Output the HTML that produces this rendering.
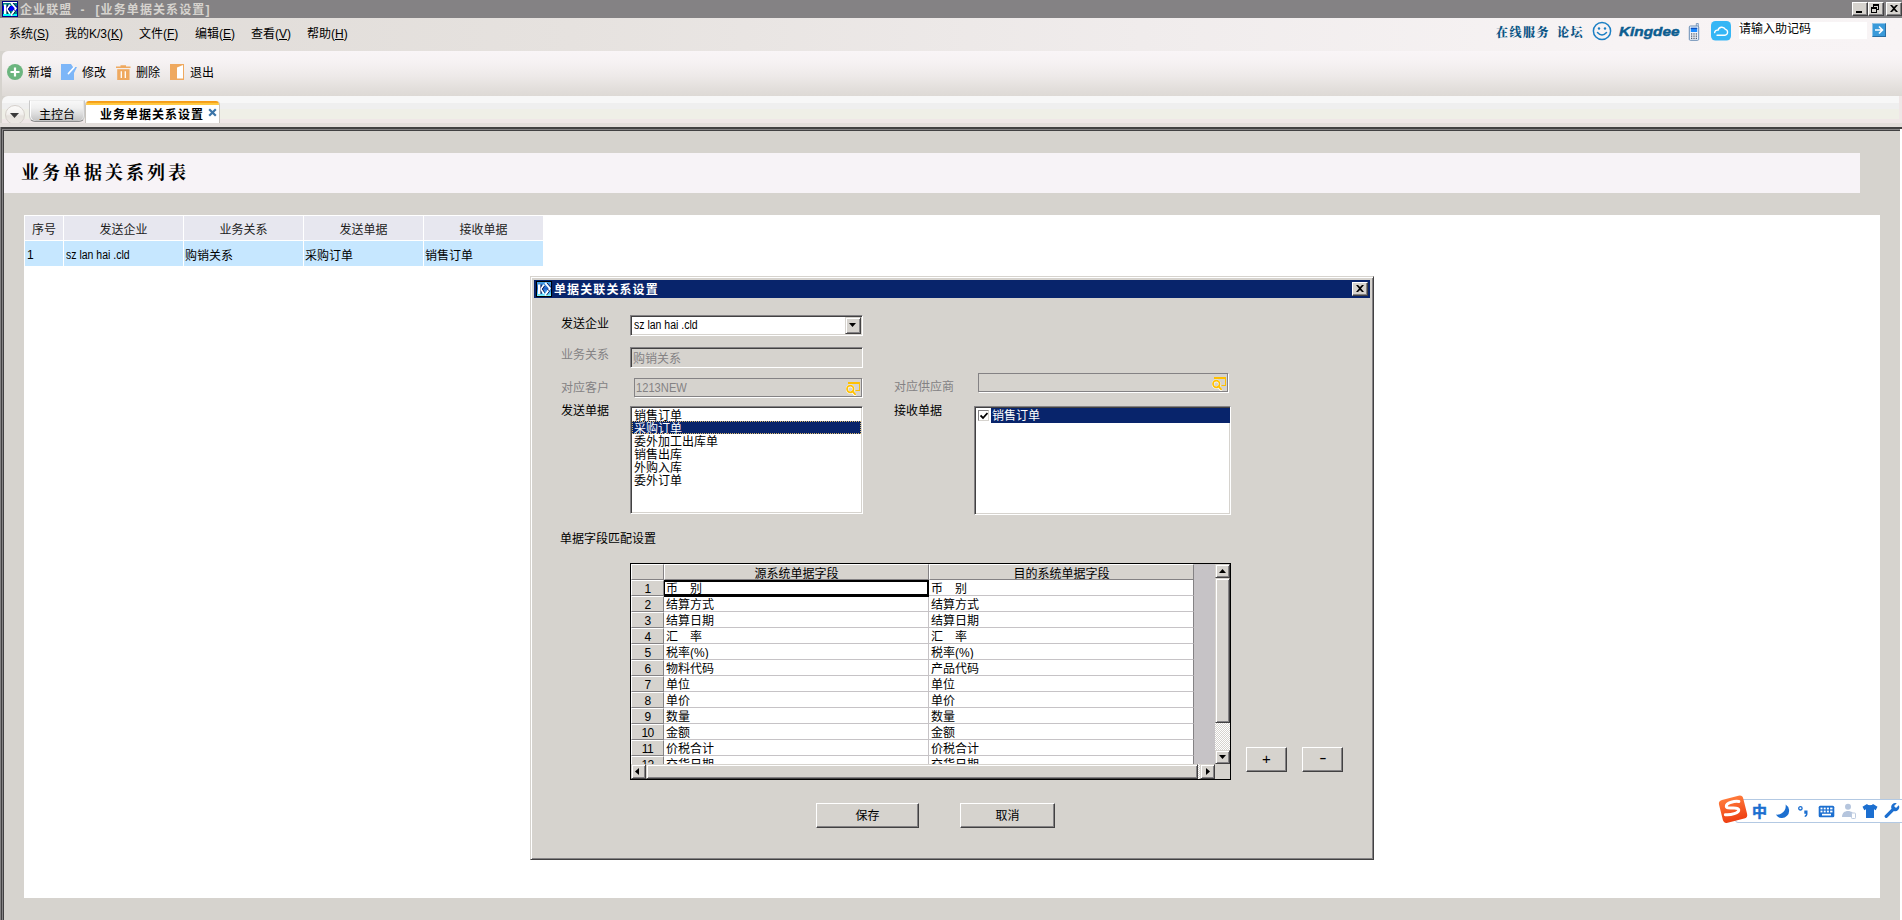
<!DOCTYPE html>
<html lang="zh-CN">
<head>
<meta charset="utf-8">
<title>企业联盟 - [业务单据关系设置]</title>
<style>
*{box-sizing:border-box;margin:0;padding:0}
html,body{width:1902px;height:920px;overflow:hidden;background:#d6d3ce}
body{position:relative;font:12px/12px "Liberation Sans","Noto Sans CJK SC",sans-serif;color:#000}
.a{position:absolute;white-space:nowrap}
.t{position:absolute;white-space:nowrap;height:14px;line-height:14px}
.tah{font-family:"Liberation Sans","Noto Sans CJK SC",sans-serif;font-size:12px;letter-spacing:-0.6px}
/* title bar */
#tb{left:0;top:0;width:1902px;height:18px;background:#848284}
#tb .cap{left:20px;top:3px;color:#d6d3ce;font-weight:bold;letter-spacing:1.1px}
.wb{position:absolute;top:2px;width:16px;height:14px;background:#d6d3ce;border:1px solid;border-color:#fff #424142 #424142 #fff;box-shadow:inset -1px -1px 0 #848284}
/* menubar */
#mb{left:0;top:18px;width:1902px;height:33px;background:linear-gradient(90deg,#dfdbd7 0,#e6e2df 30%,#f0ecec 60%,#f7f3f4 85%,#f8f4f5 100%)}
#mb .t{top:9px}
#mb u{text-underline-offset:1px}
.lnk{color:#0b5585;font-weight:900;font-family:'Liberation Serif','Noto Serif CJK SC',serif}
/* toolbar */
#tl{left:2px;top:51px;width:1900px;height:45px;border-radius:6px 0 0 0;background:linear-gradient(180deg,#f9f5f7 0,#f6f2f3 25%,#eeeae9 55%,#e2dedb 85%,#ddd9d5 100%)}
#tl .t{top:15px}
/* tab row */
#tr{left:2px;top:96px;width:1897px;height:27px;border-radius:6px 0 0 0;background:linear-gradient(180deg,#f7f7f7 0,#f7f7f7 7px,#efefef 7px,#efefef 13px,#efefe7 13px,#efefe7 23px,#efe7e7 23px,#efe7e7 27px)}
#trb{left:0;top:123px;width:1902px;height:4px;background:#e3dedb}
/* main */
#fr{left:0;top:127px;width:1902px;height:793px;background:#d6d3ce}

#fr .l{position:absolute;background:#424142}
#hd{left:4px;top:153px;width:1856px;height:40px;background:#f7f3f7}
#hd div{left:17px;top:9px;height:22px;font:bold 18px/22px "Liberation Serif","Noto Serif CJK SC",serif;letter-spacing:3px}
#wp{left:24px;top:215px;width:1856px;height:683px;background:#fff}
.th{position:absolute;top:216px;height:24px;background:#e7e7ef;text-align:center;line-height:29px;color:#222}
.td{position:absolute;top:241px;height:25px;background:#c6e7ff;line-height:31px;padding-left:1px}
.td.tah{line-height:29px}
/* dialog */
#dg{left:530px;top:276px;width:844px;height:584px;background:#d6d3ce;border:1px solid;border-color:#d6d3ce #424142 #424142 #d6d3ce;box-shadow:inset 1px 1px 0 #fff,inset -1px -1px 0 #848284}
#dg .cap{left:3px;top:3px;width:836px;height:18px;background:#08246b}
#dg .cap .t{left:20px;top:3px;color:#fff;font-weight:bold;letter-spacing:1.1px}
.gr{color:#848284}
.sunk{position:absolute;border:1px solid;border-color:#848284 #fff #fff #848284;box-shadow:inset 1px 1px 0 #424142,inset -1px -1px 0 #d6d3ce;background:#fff}
.flat{position:absolute;border:1px solid #848284;background:#d6d3ce;box-shadow:1px 1px 0 #fff}
.btn{position:absolute;background:#d6d3ce;border:1px solid;border-color:#fff #424142 #424142 #fff;box-shadow:inset -1px -1px 0 #848284,inset 1px 1px 0 #d6d3ce;text-align:center}
.sel{background:#08246b;color:#fff}
.li{position:absolute;left:1px;width:229px;height:13px;line-height:16px;padding-left:2px;overflow:hidden;white-space:nowrap}

.gh{position:absolute;height:16px;background:#d6d3ce;border:1px solid;border-color:#fff #848284 #848284 #fff;text-align:center;line-height:16px;white-space:nowrap;overflow:hidden}
.ght{line-height:19px}
.gc{position:absolute;width:265px;height:16px;background:#fff;border:1px solid #c6c3c6;border-width:0 1px 1px 0;line-height:18px;padding-left:2px;white-space:nowrap;overflow:hidden}
.gc2{border-right-color:#848284}
.dith{background:repeating-conic-gradient(#fff 0 25%,#d6d3ce 0 50%) 0 0/2px 2px}
.sb{position:absolute;background:#d6d3ce;border:1px solid;border-color:#d6d3ce #424142 #424142 #d6d3ce;box-shadow:inset 1px 1px 0 #fff,inset -1px -1px 0 #848284}
.nx{display:inline-block;transform:scaleX(.875);transform-origin:0 50%;letter-spacing:0}
</style>
</head>
<body>
<div class="a" id="tb">
  <svg class="a" style="left:2px;top:1px" width="16" height="16" viewBox="0 0 16 16"><defs><linearGradient id="k1" x1="0" y1="0" x2="0" y2="1"><stop offset="0" stop-color="#fff"/><stop offset="0.08" stop-color="#fff"/><stop offset="0.09" stop-color="#008484"/><stop offset="0.25" stop-color="#008484"/><stop offset="0.3" stop-color="#0000ff"/><stop offset="0.6" stop-color="#0000ff"/><stop offset="0.65" stop-color="#008484"/><stop offset="0.84" stop-color="#008484"/><stop offset="0.86" stop-color="#00ffff"/><stop offset="1" stop-color="#00ffff"/></linearGradient></defs><rect width="16" height="16" fill="#000084"/><rect x="1" y="1" width="14" height="14" fill="url(#k1)"/><path d="M2 3.500h2.600v9.500H2z" fill="#fff"/><path d="M4.600 3.500h1v9.500h-1z" fill="#00003a"/><path d="M5 8 8 3.800M5 8l3 4.800" fill="none" stroke="#fff" stroke-width="1.700"/><path d="M6.300 8 8.600 5M6.300 8l2.500 3.800" fill="none" stroke="#00003a" stroke-width="0.800"/><path d="M9.200 1.800 13.800 7.200 9.200 14.600" fill="none" stroke="#fff" stroke-width="2"/><path d="M11 2 15 6.600M11.300 7.800l2.200 2.400-3 4" fill="none" stroke="#00003a" stroke-width="0.800"/></svg>
  <div class="t cap">企业联盟<span style="margin:0 10px 0 8px">-</span>[业务单据关系设置]</div>
  <div class="wb" style="left:1852px"><i class="a" style="left:3px;top:8px;width:6px;height:2px;background:#000"></i></div>
  <div class="wb" style="left:1868px"><i class="a" style="left:4px;top:1px;width:6px;height:6px;border:1px solid #000;border-top-width:2px"></i><i class="a" style="left:2px;top:4px;width:6px;height:6px;border:1px solid #000;border-top-width:2px;background:#d6d3ce"></i></div>
  <div class="wb" style="left:1886px"><svg class="a" style="left:3px;top:2px" width="8" height="7" viewBox="0 0 8 7"><path d="M0 0h2l2 2 2-2h2L5 3.5 8 7H6L4 5 2 7H0l3-3.500z" fill="#000"/></svg></div>
</div>
<div class="a" id="mb">
  <div class="t" style="left:9px">系统(<u>S</u>)</div>
  <div class="t" style="left:65px">我的K/3(<u>K</u>)</div>
  <div class="t" style="left:139px">文件(<u>F</u>)</div>
  <div class="t" style="left:195px">编辑(<u>E</u>)</div>
  <div class="t" style="left:251px">查看(<u>V</u>)</div>
  <div class="t" style="left:307px">帮助(<u>H</u>)</div>
  <div class="t lnk" style="left:1496px;top:8px;letter-spacing:1.5px">在线服务</div>
  <div class="t lnk" style="left:1557px;top:8px;letter-spacing:1.5px">论坛</div>
  <svg class="a" style="left:1592px;top:3px" width="20" height="20" viewBox="0 0 20 20"><circle cx="10" cy="10" r="8.6" fill="none" stroke="#1b7fc4" stroke-width="1.5"/><circle cx="7" cy="7.500" r="1.200" fill="#1b7fc4"/><circle cx="13" cy="7.500" r="1.200" fill="#1b7fc4"/><path d="M5.500 11.500q4.500 5 9 0" fill="none" stroke="#1b7fc4" stroke-width="1.500" stroke-linecap="round"/></svg>
  <div class="a" style="left:1619px;top:5px;height:18px;font:italic bold 13px/18px 'Liberation Sans',sans-serif;color:#0c5d90;-webkit-text-stroke:0.45px #0c5d90;transform-origin:0 50%;transform:scaleX(1.18)">Kingdee</div>
  <svg class="a" style="left:1688px;top:5px" width="12" height="18" viewBox="0 0 12 18"><path d="M8.300 0.500h2v3.500h-2z" fill="#dfe8f2" stroke="#6a8db5" stroke-width="0.800"/><rect x="1.300" y="3" width="9.400" height="14.300" rx="1" fill="#eef3f9" stroke="#6a8db5" stroke-width="1"/><rect x="2.800" y="4.800" width="6.400" height="4.200" fill="#1e8cff"/><rect x="2.800" y="4.800" width="6.400" height="1.300" fill="#0a4fc0"/><g fill="#555f70"><rect x="3" y="10.300" width="1.300" height="1.300"/><rect x="5.350" y="10.300" width="1.300" height="1.300"/><rect x="7.700" y="10.300" width="1.300" height="1.300"/><rect x="3" y="12.500" width="1.300" height="1.300"/><rect x="5.350" y="12.500" width="1.300" height="1.300"/><rect x="7.700" y="12.500" width="1.300" height="1.300"/><rect x="3" y="14.700" width="1.300" height="1.300"/><rect x="5.350" y="14.700" width="1.300" height="1.300"/><rect x="7.700" y="14.700" width="1.300" height="1.300"/></g></svg>
  <svg class="a" style="left:1711px;top:3px" width="20" height="20" viewBox="0 0 20 20"><rect width="20" height="19.500" rx="4.500" fill="#36b6f5"/><path d="M3.600 11.600A3 3 0 0 1 7 9.200 4 4 0 0 1 14.400 8.400 3 3 0 0 1 14.300 14.200H6" fill="none" stroke="#fff" stroke-width="1.350" stroke-linecap="round"/></svg>
  <div class="a" style="left:1739px;top:4px;width:128px;height:17px;background:#fff"></div>
  <div class="t" style="left:1739px;top:4px">请输入助记码</div>
  <div class="a" style="left:1872px;top:5px;width:14px;height:14px;background:#3a9ad9;border:1px solid #8fc4e8;border-right-color:#2a6ea3;border-bottom-color:#2a6ea3"><svg class="a" style="left:1px;top:1px" width="10" height="10" viewBox="0 0 10 10"><path d="M1 5h7M5 1.500 8.500 5 5 8.500" fill="none" stroke="#fff" stroke-width="1.600"/></svg></div>
</div>
<div class="a" id="tl">
  <svg class="a" style="left:5px;top:13px" width="16" height="16" viewBox="0 0 16 16"><circle cx="8" cy="8" r="8" fill="#6cb57f"/><path d="M8 3.500v9M3.500 8h9" stroke="#fff" stroke-width="2.200"/></svg>
  <div class="t" style="left:26px">新增</div>
  <svg class="a" style="left:59px;top:13px" width="16" height="16" viewBox="0 0 16 16"><path d="M0 0h10l2 3h4l-3 6v7H0z" fill="#7db6f8"/><path d="M7.500 9.500 13 3.500" stroke="#fff" stroke-width="1.800" stroke-linecap="round"/></svg>
  <div class="t" style="left:80px">修改</div>
  <svg class="a" style="left:114px;top:14px" width="15" height="15" viewBox="0 0 15 15"><path d="M4.500 0.300h5.500v1.200h4.500v1.600H0V1.500h4.500z" fill="#efa95f"/><path d="M1.200 4.200h12.300V15H1.200z" fill="#efa95f"/><path d="M5.300 6.200v6.800M9.300 6.200v6.800" stroke="#fff" stroke-width="1.300"/></svg>
  <div class="t" style="left:134px">删除</div>
  <svg class="a" style="left:168px;top:13px" width="14" height="16" viewBox="0 0 14 16"><rect width="14" height="16" fill="#efa95f"/><path d="M7 3.500 13 1v13.500H7z" fill="#fff"/></svg>
  <div class="t" style="left:188px">退出</div>
</div>
<div class="a" id="tr">
  <div class="a" style="left:3px;top:9px;width:20px;height:20px;border-radius:10px;border:1px solid #d5d0cb;background:linear-gradient(180deg,#fbfaf9 0,#f3f1ee 45%,#e6e2dd 55%,#ece8e4 100%)"></div>
  <svg class="a" style="left:8px;top:17px" width="9" height="5" viewBox="0 0 9 5"><path d="M0 0h9L4.500 5z" fill="#3a3a3a"/></svg>
  <div class="a" style="left:27px;top:4px;width:56px;height:22px;border:1px solid #c9c9c9;border-top-color:#ececec;border-bottom-color:#8e8e8e;border-radius:0 0 6px 6px;background:linear-gradient(180deg,#f8f8f8 0,#efefef 35%,#dcdcdc 65%,#c2c2c2 100%);box-shadow:inset 1px 0 0 #fff,inset -1px 0 0 #e6e6e6"></div>
  <div class="t" style="left:37px;top:12px">主控台</div>
  <div class="a" style="left:83px;top:5px;width:135px;height:22px;background:#fff;border:1px solid #c8c4be;border-top:0;border-bottom:0;border-radius:4px 4px 0 0;overflow:hidden"><i class="a" style="left:-1px;top:0;width:137px;height:4px;background:linear-gradient(180deg,#f59a14 0,#f7a520 45%,#ffc63c 55%,#ffcb45 100%)"></i></div>
  <div class="t" style="left:98px;top:12px;font-weight:bold;letter-spacing:1px">业务单据关系设置</div>
  <svg class="a" style="left:206px;top:12px" width="9" height="9" viewBox="0 0 9 9"><path d="M1.200 1.200 7.800 7.800M7.800 1.200 1.200 7.800" stroke="#3b74a8" stroke-width="2.200"/></svg>
</div>
<div class="a" id="trb"></div>
<div class="a" style="left:1899px;top:96px;width:3px;height:27px;background:#efe7e7"></div>
<div class="a" id="fr">
  <i class="l" style="left:0;top:0;width:1902px;height:2px"></i>
  <i class="l" style="left:0;top:2px;width:1900px;height:1px;background:#848284"></i>
  <i class="l" style="left:0;top:3px;width:1900px;height:1px"></i>
  <i class="l" style="left:0;top:0;width:1px;height:793px;background:#848284"></i>
  <i class="l" style="left:1px;top:0;width:1px;height:793px"></i>
  <i class="l" style="left:2px;top:2px;width:1px;height:791px;background:#848284"></i>
  <i class="l" style="left:3px;top:3px;width:1px;height:790px"></i>
  <i class="l" style="left:1900px;top:2px;width:2px;height:791px;background:#fff"></i>
</div>
<div class="a" id="hd"><div class="a">业务单据关系列表</div></div>
<div class="a" id="wp"></div>
<div class="th" style="left:25px;width:38px">序号</div>
<div class="th" style="left:64px;width:119px">发送企业</div>
<div class="th" style="left:184px;width:119px">业务关系</div>
<div class="th" style="left:304px;width:119px">发送单据</div>
<div class="th" style="left:424px;width:119px">接收单据</div>
<div class="td tah" style="left:25px;width:38px;padding-left:2px">1</div>
<div class="td tah" style="left:64px;width:119px;padding-left:2px"><span class="nx">sz lan hai .cld</span></div>
<div class="td" style="left:184px;width:119px">购销关系</div>
<div class="td" style="left:304px;width:119px">采购订单</div>
<div class="td" style="left:424px;width:119px">销售订单</div>
<div class="a" id="dg">
  <div class="a cap">
    <svg class="a" style="left:2px;top:1px" width="16" height="16" viewBox="0 0 16 16"><defs><linearGradient id="k2" x1="0" y1="0" x2="0" y2="1"><stop offset="0" stop-color="#4aa5e7"/><stop offset="0.45" stop-color="#2160c6"/><stop offset="0.75" stop-color="#4ab6ff"/><stop offset="0.9" stop-color="#63dfff"/><stop offset="1" stop-color="#84ffff"/></linearGradient></defs><rect width="16" height="16" fill="#000"/><rect x="1" y="1" width="14" height="14" fill="url(#k2)"/><path d="M2 3.500h2.600v9.500H2z" fill="#fff"/><path d="M4.600 3.500h1v9.500h-1z" fill="#00003a"/><path d="M5 8 8 3.800M5 8l3 4.800" fill="none" stroke="#fff" stroke-width="1.700"/><path d="M6.300 8 8.600 5M6.300 8l2.500 3.800" fill="none" stroke="#00003a" stroke-width="0.800"/><path d="M9.200 1.800 13.800 7.200 9.200 14.600" fill="none" stroke="#fff" stroke-width="2"/><path d="M11 2 15 6.600M11.300 7.800l2.200 2.400-3 4" fill="none" stroke="#00003a" stroke-width="0.800"/></svg>
    <div class="t">单据关联关系设置</div>
    <div class="wb" style="left:818px;top:2px"><svg class="a" style="left:3px;top:2px" width="8" height="7" viewBox="0 0 8 7"><path d="M0 0h2l2 2 2-2h2L5 3.500 8 7H6L4 5 2 7H0l3-3.500z" fill="#000"/></svg></div>
  </div>
  <div class="t" style="left:30px;top:40px">发送企业</div>
  <div class="sunk" style="left:99px;top:38px;width:233px;height:21px"><div class="t tah" style="left:3px;top:2px"><span class="nx">sz lan hai .cld</span></div><div class="sb" style="left:214px;top:1px;width:16px;height:17px"><svg class="a" style="left:3px;top:5px" width="7" height="4" viewBox="0 0 7 4"><path d="M0 0h7L3.500 4z"/></svg></div></div>
  <div class="t gr" style="left:30px;top:71px">业务关系</div>
  <div class="sunk" style="left:99px;top:70px;width:233px;height:21px;background:#d6d3ce"><div class="t gr" style="left:2px;top:4px">购销关系</div></div>
  <div class="t gr" style="left:30px;top:104px">对应客户</div>
  <div class="flat" style="left:103px;top:101px;width:228px;height:19px"><div class="t tah gr" style="left:1px;top:2px"><span class="nx" style="transform:scaleX(.93)">1213NEW</span></div><svg class="a" style="left:211px;top:2px" width="15" height="15" viewBox="0 0 15 15"><path d="M2 1h12v9H9.500V9H13V3H2z" fill="#ffc000"/><path d="M6.600 10.900 9 14" stroke="#fff" stroke-width="2.600" stroke-linecap="round"/><circle cx="4.300" cy="8.200" r="3.300" fill="#d6d3ce" stroke="#fff" stroke-width="2.600"/><circle cx="4.300" cy="8" r="3.300" fill="none" stroke="#ffc000" stroke-width="1.700"/><path d="M6.800 10.600 9.200 13.400" stroke="#ffc000" stroke-width="1.700" stroke-linecap="round"/></svg></div>
  <div class="t gr" style="left:363px;top:103px">对应供应商</div>
  <div class="flat" style="left:447px;top:96px;width:250px;height:19px"><svg class="a" style="left:233px;top:2px" width="15" height="15" viewBox="0 0 15 15"><path d="M2 1h12v9H9.500V9H13V3H2z" fill="#ffc000"/><path d="M6.600 10.900 9 14" stroke="#fff" stroke-width="2.600" stroke-linecap="round"/><circle cx="4.300" cy="8.200" r="3.300" fill="#d6d3ce" stroke="#fff" stroke-width="2.600"/><circle cx="4.300" cy="8" r="3.300" fill="none" stroke="#ffc000" stroke-width="1.700"/><path d="M6.800 10.600 9.200 13.400" stroke="#ffc000" stroke-width="1.700" stroke-linecap="round"/></svg></div>
  <div class="t" style="left:30px;top:127px">发送单据</div>
  <div class="sunk" style="left:99px;top:129px;width:233px;height:108px">
    <div class="li" style="top:1px">销售订单</div>
    <div class="li sel" style="top:14px;outline:1px dotted #d9b96a;outline-offset:-1px">采购订单</div>
    <div class="li" style="top:27px">委外加工出库单</div>
    <div class="li" style="top:40px">销售出库</div>
    <div class="li" style="top:53px">外购入库</div>
    <div class="li" style="top:66px">委外订单</div>
  </div>
  <div class="t" style="left:363px;top:127px">接收单据</div>
  <div class="sunk" style="left:443px;top:129px;width:257px;height:109px">
    <div class="a sel" style="left:16px;top:1px;width:239px;height:15px"></div>
    <div class="a" style="left:3px;top:3px;width:11px;height:11px;background:#fff;border:1px solid #848284;border-right-color:#d6d3ce;border-bottom-color:#d6d3ce"><svg class="a" style="left:1px;top:1px" width="8" height="8" viewBox="0 0 8 8"><path d="M0.500 3.500 3 6 7.500 1" fill="none" stroke="#000" stroke-width="1.800"/></svg></div>
    <div class="t" style="left:17px;top:2px;color:#fff">销售订单</div>
  </div>
  <div class="t" style="left:29px;top:255px">单据字段匹配设置</div>
  <div class="a" id="gd" style="left:99px;top:286px;width:601px;height:217px;border:1px solid #000;background:#fff;overflow:hidden">
  <i class="a" style="left:563px;top:0;width:21px;height:200px;background:#c6c3c6"></i>
  <div class="gh" style="left:0;top:0;width:33px"></div>
  <div class="gh ght" style="left:33px;top:0;width:265px">源系统单据字段</div>
  <div class="gh ght" style="left:298px;top:0;width:265px">目的系统单据字段</div>
  <div class="gh tah" style="left:0;top:16px;width:33px">1</div>
  <div class="gc" style="left:33px;top:16px">币　别</div>
  <div class="gc gc2" style="left:298px;top:16px">币　别</div>
  <div class="gh tah" style="left:0;top:32px;width:33px">2</div>
  <div class="gc" style="left:33px;top:32px">结算方式</div>
  <div class="gc gc2" style="left:298px;top:32px">结算方式</div>
  <div class="gh tah" style="left:0;top:48px;width:33px">3</div>
  <div class="gc" style="left:33px;top:48px">结算日期</div>
  <div class="gc gc2" style="left:298px;top:48px">结算日期</div>
  <div class="gh tah" style="left:0;top:64px;width:33px">4</div>
  <div class="gc" style="left:33px;top:64px">汇　率</div>
  <div class="gc gc2" style="left:298px;top:64px">汇　率</div>
  <div class="gh tah" style="left:0;top:80px;width:33px">5</div>
  <div class="gc" style="left:33px;top:80px">税率(%)</div>
  <div class="gc gc2" style="left:298px;top:80px">税率(%)</div>
  <div class="gh tah" style="left:0;top:96px;width:33px">6</div>
  <div class="gc" style="left:33px;top:96px">物料代码</div>
  <div class="gc gc2" style="left:298px;top:96px">产品代码</div>
  <div class="gh tah" style="left:0;top:112px;width:33px">7</div>
  <div class="gc" style="left:33px;top:112px">单位</div>
  <div class="gc gc2" style="left:298px;top:112px">单位</div>
  <div class="gh tah" style="left:0;top:128px;width:33px">8</div>
  <div class="gc" style="left:33px;top:128px">单价</div>
  <div class="gc gc2" style="left:298px;top:128px">单价</div>
  <div class="gh tah" style="left:0;top:144px;width:33px">9</div>
  <div class="gc" style="left:33px;top:144px">数量</div>
  <div class="gc gc2" style="left:298px;top:144px">数量</div>
  <div class="gh tah" style="left:0;top:160px;width:33px">10</div>
  <div class="gc" style="left:33px;top:160px">金额</div>
  <div class="gc gc2" style="left:298px;top:160px">金额</div>
  <div class="gh tah" style="left:0;top:176px;width:33px">11</div>
  <div class="gc" style="left:33px;top:176px">价税合计</div>
  <div class="gc gc2" style="left:298px;top:176px">价税合计</div>
  <div class="gh tah" style="left:0;top:192px;width:33px">12</div>
  <div class="gc" style="left:33px;top:192px">交货日期</div>
  <div class="gc gc2" style="left:298px;top:192px">交货日期</div>
  <i class="a" style="left:33px;top:16px;width:265px;height:17px;border:2px solid #000;border-left-width:1px;border-bottom-width:3px"></i>
  <div class="a dith" style="left:584px;top:0;width:15px;height:200px"></div>
  <div class="sb" style="left:584px;top:0;width:15px;height:14px"><svg class="a" style="left:3px;top:4px" width="7" height="4" viewBox="0 0 7 4"><path d="M0 4h7L3.500 0z"/></svg></div>
  <div class="sb" style="left:584px;top:14px;width:15px;height:145px"></div>
  <div class="sb" style="left:584px;top:186px;width:15px;height:14px"><svg class="a" style="left:3px;top:4px" width="7" height="4" viewBox="0 0 7 4"><path d="M0 0h7L3.500 4z"/></svg></div>
  <div class="a dith" style="left:0;top:200px;width:584px;height:15px"></div>
  <div class="a" style="left:584px;top:200px;width:15px;height:15px;background:#d6d3ce"></div>
  <div class="sb" style="left:0;top:200px;width:15px;height:15px"><svg class="a" style="left:3px;top:3px" width="4" height="7" viewBox="0 0 4 7"><path d="M4 0v7L0 3.500z"/></svg></div>
  <div class="sb" style="left:15px;top:200px;width:552px;height:15px"></div>
  <div class="sb" style="left:569px;top:200px;width:15px;height:15px"><svg class="a" style="left:5px;top:3px" width="4" height="7" viewBox="0 0 4 7"><path d="M0 0v7L4 3.500z"/></svg></div>
  </div>
  <div class="btn" style="left:715px;top:470px;width:41px;height:25px;line-height:22px;font-size:15px">+</div>
  <div class="btn" style="left:771px;top:470px;width:41px;height:25px;line-height:19px;font-size:17px"><span style="display:inline-block;transform:scaleX(1.3)">-</span></div>
  <div class="btn" style="left:285px;top:526px;width:103px;height:25px;line-height:25px">保存</div>
  <div class="btn" style="left:429px;top:526px;width:95px;height:25px;line-height:25px">取消</div>
</div>
<div class="a" id="ime" style="left:1735px;top:799px;width:180px;height:24px;background:#fff;border:1px solid #b3c9e3;border-radius:3px"></div>
<svg class="a" style="left:1716px;top:793px" width="34" height="32" viewBox="0 0 34 32"><defs><linearGradient id="sg" x1="0" y1="0" x2="0" y2="1"><stop offset="0" stop-color="#ff7a3a"/><stop offset="1" stop-color="#ee3f12"/></linearGradient></defs><g transform="rotate(-14 17 16)"><rect x="4.500" y="4.500" width="25" height="23.500" rx="4" fill="url(#sg)"/><path d="M24.500 10.200c-3.500-1.600-12.500-2-13.300 1.500-0.900 3.800 11.500 2.500 11.200 6.300-0.300 3.300-9 3.600-14.200 1.700" fill="none" stroke="#fff" stroke-width="3" stroke-linecap="round"/></g></svg>
<div class="a" style="left:1752px;top:803px;height:18px;font:bold 15px/18px 'Liberation Sans','Noto Sans CJK SC',sans-serif;color:#1c6fd0;-webkit-text-stroke:0.5px #1c6fd0">中</div>
<svg class="a" style="left:1775px;top:803px" width="16" height="16" viewBox="0 0 16 16"><path d="M10.600 1.600A7.200 7.200 0 1 1 0.800 11.600 8.600 8.600 0 0 0 10.600 1.600z" fill="#1c6fd0"/></svg>
<svg class="a" style="left:1796px;top:803px" width="14" height="16" viewBox="0 0 14 16"><circle cx="4.400" cy="5.300" r="1.700" fill="none" stroke="#1c6fd0" stroke-width="1.300"/><path d="M8.300 7.500h3.200v3.200c0 1.800-1 3-2.800 3.300v-1.300c0.800-0.300 1.200-0.900 1.200-1.900H8.300z" fill="#1c6fd0"/></svg>
<svg class="a" style="left:1818px;top:805px" width="17" height="13" viewBox="0 0 17 13"><rect x="0.700" y="0.700" width="15.600" height="11.600" rx="1.500" fill="#1c6fd0"/><g fill="#fff"><rect x="2.500" y="2.600" width="2" height="1.800"/><rect x="5.700" y="2.600" width="2" height="1.800"/><rect x="8.900" y="2.600" width="2" height="1.800"/><rect x="12.100" y="2.600" width="2.400" height="1.800"/><rect x="2.500" y="5.600" width="2" height="1.800"/><rect x="5.700" y="5.600" width="2" height="1.800"/><rect x="8.900" y="5.600" width="2" height="1.800"/><rect x="12.100" y="5.600" width="2.400" height="1.800"/><rect x="4" y="8.800" width="9" height="1.700"/></g></svg>
<svg class="a" style="left:1841px;top:803px" width="16" height="17" viewBox="0 0 16 17"><circle cx="7" cy="3.800" r="3" fill="#b5c5dd"/><path d="M1 14c0-4 2.500-6 6-6s6 2 6 6z" fill="#b5c5dd"/><rect x="10.500" y="10" width="4" height="5.500" rx="0.800" fill="#fff" stroke="#b5c5dd" stroke-width="0.900"/></svg>
<svg class="a" style="left:1862px;top:803px" width="16" height="16" viewBox="0 0 16 16"><path d="M5 1c1 1.600 5 1.600 6 0l4.500 2.800-1.800 3.400-1.700-0.900V15H4V6.300l-1.700 0.900L0.500 3.800z" fill="#1c6fd0"/></svg>
<svg class="a" style="left:1884px;top:802px" width="16" height="17" viewBox="0 0 16 17"><path d="M14.800 3.200 12 6 10 4l2.800-2.800a4.200 4.200 0 0 0-5.300 5.500L1 13.200a1.700 1.700 0 0 0 2.400 2.400l6.500-6.500a4.200 4.200 0 0 0 4.900-5.900z" fill="#1c6fd0"/></svg>
</body>
</html>
